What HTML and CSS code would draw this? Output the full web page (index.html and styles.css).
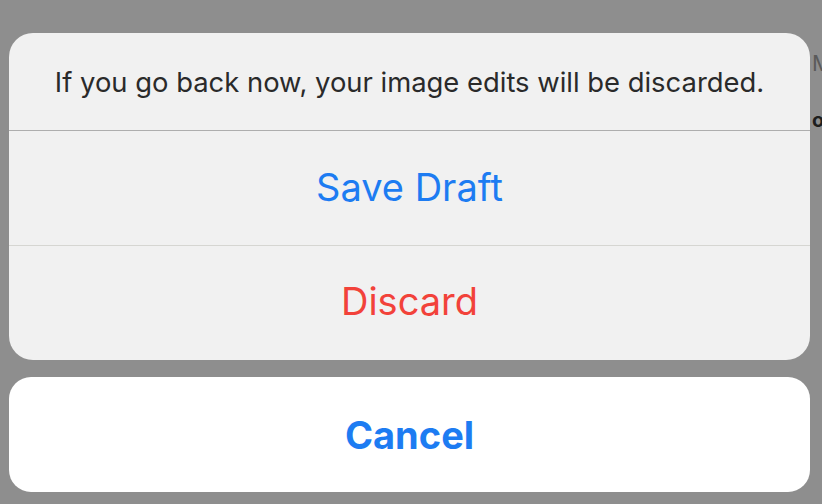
FILE: index.html
```html
<!DOCTYPE html>
<html lang="en">
<head>
    <meta charset="UTF-8">
    <meta name="viewport" content="width=device-width, initial-scale=1.0">
    <title>Discard edits</title>
    <link rel="stylesheet" href="styles.css">
</head>
<body>
    <div class="backdrop">
        <span class="behind behind-m">M</span>
        <span class="behind behind-o">oo</span>
    </div>

    <div class="sheet">
        <div class="group">
            <div class="message">If you go back now, your image edits will be discarded.</div>
            <button class="action">Save Draft</button>
            <button class="action destructive">Discard</button>
        </div>
        <button class="cancel">Cancel</button>
    </div>
</body>
</html>
```

FILE: styles.css
```css
html, body { margin: 0; height: 100%; }
body { background: #8e8e8e; font-family: Inter, "Liberation Sans", Arial, sans-serif; overflow: hidden; position: relative; }
.backdrop { position: absolute; inset: 0; }
.behind { position: absolute; left: 812px; color: #3a3a3a; white-space: nowrap; }
.behind-m { top: 50px; font-size: 22px; color: #5a5a5a; }
.behind-o { top: 108px; font-size: 20px; font-weight: 700; color: #1e1e1e; }
.sheet { position: relative; display: flex; flex-direction: column; gap: 17px; width: 801px; padding: 33px 0 0 9px; }
.group { background: #f1f1f1; border-radius: 24px; overflow: hidden; display: flex; flex-direction: column; }
.message { height: 98px; box-sizing: border-box; border-bottom: 1px solid #aeaeae; display: flex; align-items: center; justify-content: center; font-size: 27.4px; color: #2a2a2a; padding-top: 1px; }
.action { height: 114px; border: none; background: none; font-family: inherit; font-size: 38px; color: #1d7cf2; cursor: pointer; padding: 0 0 2px; }
.action + .action { border-top: 1px solid #d6d6d2; height: 115px; padding: 0 0 5px; }
.destructive { color: #f2423a; }
.cancel { height: 115px; border: none; border-radius: 22px; background: #fff; font-family: inherit; font-size: 38px; font-weight: 700; color: #1d7cf2; cursor: pointer; padding: 0; }
```
